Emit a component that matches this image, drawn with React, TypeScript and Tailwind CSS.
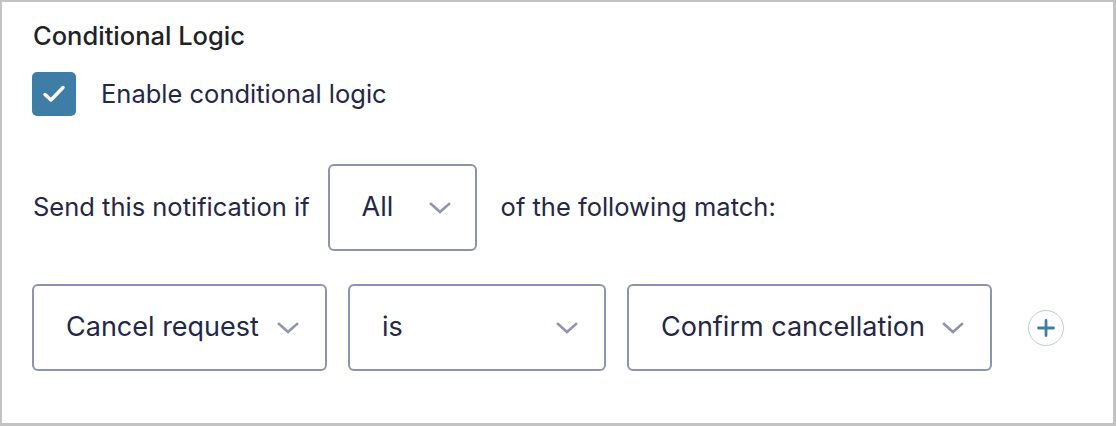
import React from "react";

function Chevron() {
  return (
    <svg width="22" height="12" viewBox="0 0 22 12" fill="none" className="shrink-0">
      <path d="M2 2L11 10L20 2" stroke="#9092b2" strokeWidth="2.6" strokeLinecap="square" />
    </svg>
  );
}

function Select({ label, width }: { label: string; width: string }) {
  return (
    <div
      className={`flex items-center justify-between h-[87px] rounded-[6px] border-2 border-[#9092b2] bg-white ${width}`}
    >
      <span className="pl-[32px] text-[27px] text-[#242748] whitespace-nowrap">{label}</span>
      <span className="pr-[26px]">
        <Chevron />
      </span>
    </div>
  );
}

export default function App() {
  return (
    <div
      className="w-[1116px] h-[426px] bg-white border-t-2 border-l-2 border-r-[3px] border-b-[3px] border-[#c3c3c3] overflow-hidden"
      style={{ fontFamily: "Inter, 'Noto Sans', sans-serif" }}
    >
      <div className="pl-[30px] pt-[18px]">
        <div className="pl-[1px] text-[25.5px] font-medium text-[#1d2327] leading-[32px]">Conditional Logic</div>
        <div className="flex items-center mt-[20px] h-[44px]">
          <div className="w-[44px] h-[44px] rounded-[5px] bg-[#3e7da6] flex items-center justify-center">
            <svg width="24" height="20" viewBox="0 0 24 20" fill="none">
              <path d="M3 10.5L9 16L21 3.5" stroke="white" strokeWidth="3.4" strokeLinecap="round" strokeLinejoin="round" />
            </svg>
          </div>
          <span className="ml-[25px] text-[25.5px] text-[#242748] whitespace-nowrap">Enable conditional logic</span>
        </div>
        <div className="flex items-center mt-[48px] pl-[1px]">
          <span className="text-[25.5px] text-[#242748] whitespace-nowrap">Send this notification if</span>
          <div className="ml-[18px] flex items-center justify-between w-[149px] h-[87px] rounded-[6px] border-2 border-[#9092b2]">
            <span className="pl-[32px] text-[27px] text-[#242748]">All</span>
            <span className="pr-[24px]">
              <Chevron />
            </span>
          </div>
          <span className="ml-[24px] text-[25.5px] text-[#242748] whitespace-nowrap">of the following match:</span>
        </div>
        <div className="flex items-center mt-[33px] gap-[21px]">
          <Select label="Cancel request" width="w-[295px]" />
          <Select label="is" width="w-[258px]" />
          <Select label="Confirm cancellation" width="w-[365px]" />
          <div className="ml-[15px] w-[36px] h-[36px] rounded-full border-[1.5px] border-[#c5c7df] flex items-center justify-center">
            <svg width="18" height="18" viewBox="0 0 18 18" fill="none">
              <path d="M9 1.5V16.5M1.5 9H16.5" stroke="#3e7da6" strokeWidth="2.8" strokeLinecap="round" />
            </svg>
          </div>
        </div>
      </div>
    </div>
  );
}
